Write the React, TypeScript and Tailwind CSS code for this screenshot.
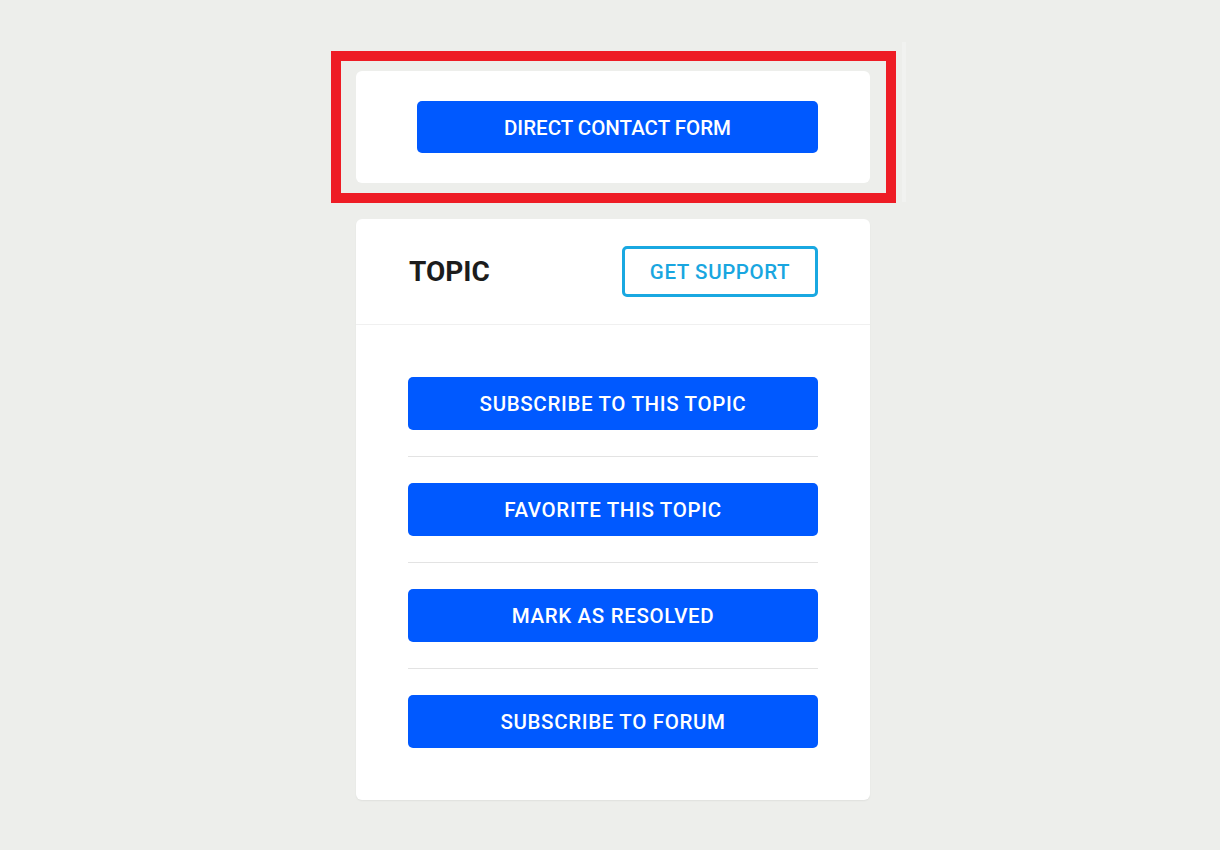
import React from 'react'

const actions = [
  'SUBSCRIBE TO THIS TOPIC',
  'FAVORITE THIS TOPIC',
  'MARK AS RESOLVED',
  'SUBSCRIBE TO FORUM',
]

function BlueButton({ label, className }: { label: string; className?: string }) {
  return (
    <button
      className={`flex items-center justify-center rounded-[5px] bg-[#0059ff] pt-[2px] text-[20.5px] font-medium text-white ${className ?? ''}`}
    >
      {label}
    </button>
  )
}

export default function App() {
  return (
    <div
      className="relative min-h-[850px] bg-[#edeeeb]"
      style={{ fontFamily: 'Roboto, "Liberation Sans", sans-serif' }}
    >
      {/* faint strip right of the highlighted card */}
      <div className="absolute left-[902px] top-[42px] h-[160px] w-[4px] bg-[#f1f2f0]" />

      <div className="ml-[356px] w-[514px] pt-[71px] pb-[50px]">
        {/* Contact card */}
        <div className="relative flex h-[112px] items-center rounded-md bg-white pl-[61px] pr-[52px]">
          <BlueButton label="DIRECT CONTACT FORM" className="h-[52px] w-[401px]" />
          {/* highlight frame */}
          <div className="pointer-events-none absolute -left-[25px] -right-[26px] -top-[20px] -bottom-[20px] border-[10px] border-[#ee1c25]" />
        </div>

        {/* Topic card */}
        <div className="mt-[36px] rounded-md bg-white shadow-[0_1px_2px_rgba(0,0,0,0.06)]">
          <div className="flex h-[106px] items-center justify-between border-b border-[#f0f0f0] px-[52px]">
            <h2 className="pl-[1px] text-[28px] font-bold text-[#1c1c1c]">TOPIC</h2>
            <button className="flex h-[51px] w-[196px] items-center justify-center rounded-[5px] border-[3px] border-[#19a8e1] pt-px text-[20.5px] font-medium tracking-[0.6px] text-[#19a6e0]">
              GET SUPPORT
            </button>
          </div>
          <div className="flex flex-col px-[52px] py-[52px]">
            {actions.map((label, i) => (
              <div key={label}>
                {i > 0 && <div className="my-[26px] h-px bg-[#e3e3e3]" />}
                <BlueButton label={label} className="h-[53px] w-full tracking-[0.65px]" />
              </div>
            ))}
          </div>
        </div>
      </div>
    </div>
  )
}
